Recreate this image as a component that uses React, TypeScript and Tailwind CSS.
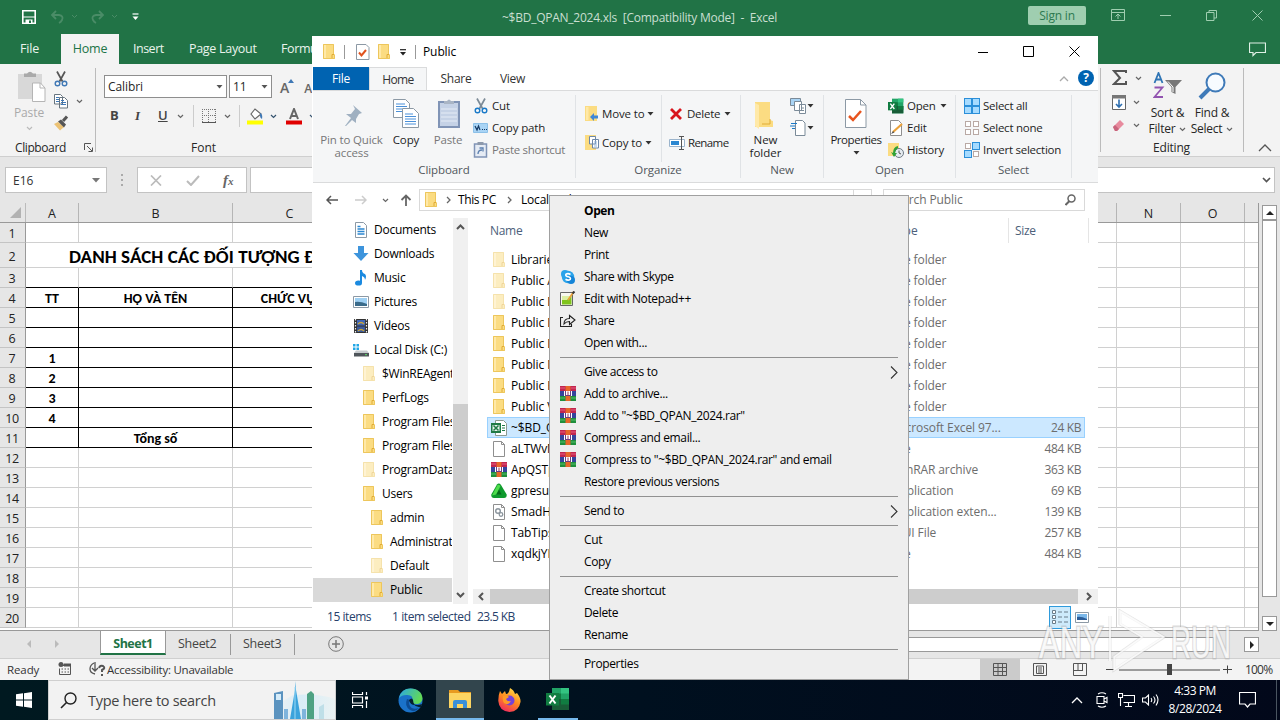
import { ReactNode } from 'react';
import clsx from 'clsx';

type IconProps = { className?: string; faded?: boolean };

/* ---------- small shared glyphs ---------- */

function Chevron({ color = '#666', className = '' }: { color?: string; className?: string }) {
  return (
    <svg width="7" height="5" viewBox="0 0 7 5" className={clsx('shrink-0', className)}>
      <path d="M1 1l2.5 2.5L6 1" fill="none" stroke={color} strokeWidth="1.2" />
    </svg>
  );
}

function Caret({ color = '#333', className = '' }: { color?: string; className?: string }) {
  return (
    <svg width="7" height="4" viewBox="0 0 7 4" className={clsx('shrink-0', className)}>
      <path d="M0.5 0h6L3.5 3.5z" fill={color} />
    </svg>
  );
}

function Folder({ faded, className = '' }: IconProps) {
  return (
    <svg width="16" height="16" viewBox="0 0 16 16" className={clsx('shrink-0', faded && 'opacity-50', className)}>
      <path d="M2 0h11v10l1 .5V15H2z" fill="#fbdc82" />
      <path d="M2.500.5H12.500v10l1 .5v3.500h-11z" fill="none" stroke="#edc65c" />
      <path d="M3 1h2v13H3z" fill="#ffe9a8" />
      <path d="M11 14v-3.5h2" fill="none" stroke="#e0ac35" />
    </svg>
  );
}

function Page() {
  return (
    <svg width="16" height="16" viewBox="0 0 16 16" className="shrink-0">
      <path d="M2.5.5h8l3 3v12h-11z" fill="#fff" stroke="#8f8f8f" />
      <path d="M10.5.5v3h3" fill="none" stroke="#8f8f8f" />
    </svg>
  );
}

function RarIcon() {
  return (
    <svg width="16" height="16" viewBox="0 0 16 16" className="shrink-0">
      <path d="M0 0h16v5H0z" fill="#c2264f" />
      <path d="M0 5h16v5H0z" fill="#35449c" />
      <path d="M0 10h16v5H0z" fill="#1f8f3c" />
      <path d="M5.500 0h5v15h-5z" fill="#e8672a" />
      <path d="M4 5h8v5H4z" fill="#6a3f86" />
      <path d="M4.500 5v5M11.500 5v5" stroke="#fff" />
      <path d="M6 5h4v4H6z" fill="#fff" />
      <path d="M7.500 5.500h1V9h-1z" fill="#a03058" />
      <path d="M0 2h5M11 2h5" stroke="#ef6a8c" strokeWidth=".8" />
      <path d="M0 12h5M11 12h5" stroke="#62c875" strokeWidth=".8" />
    </svg>
  );
}

function XlsIcon() {
  return (
    <svg width="16" height="16" viewBox="0 0 16 16" className="shrink-0">
      <path d="M4.500.5h8l3 3v12h-11z" fill="#fff" stroke="#8c9a90" />
      <path d="M0 3h10v10H0z" fill="#1f7a45" />
      <path d="M1.500 5h7v6h-7z" fill="#e8f3ec" />
      <path d="M2.500 5.500l5 5M7.500 5.500l-5 5" stroke="#1f7a45" strokeWidth="1.500" />
      <path d="M11 5.500h3M11 8h3M11 10.500h3" stroke="#1f7a45" />
    </svg>
  );
}

function GpIcon() {
  return (
    <svg width="16" height="16" viewBox="0 0 16 16" className="shrink-0">
      <path d="M6 1.500Q8-.5 10 2l5.700 9.500Q16 15 13 15H3Q0 15 .3 11.500z" fill="#0f9a2d" />
      <path d="M6.500 2Q8 1 9.500 3L7 8l-2 3.500-4 1z" fill="#4fdc4c" />
      <path d="M8 6.500l2.500 5h-5z" fill="#066a1b" />
    </svg>
  );
}

function DllIcon() {
  return (
    <svg width="16" height="16" viewBox="0 0 16 16" className="shrink-0">
      <path d="M2.500.5h8l3 3v12h-11z" fill="#fff" stroke="#8f8f8f" />
      <path d="M10.500.5v3h3" fill="none" stroke="#8f8f8f" />
      <circle cx="7" cy="7" r="2.300" fill="none" stroke="#8a949c" strokeWidth="1.400" />
      <circle cx="10" cy="10.500" r="1.800" fill="none" stroke="#8a949c" strokeWidth="1.300" />
    </svg>
  );
}

function Scissors({ gray = false }: { gray?: boolean }) {
  return (
    <svg width="16" height="16" viewBox="0 0 16 16" className="shrink-0">
      <path d="M4 .5l5.500 10M12 .5l-5.500 10" stroke={gray ? '#555' : '#7c8b97'} strokeWidth="1.700" />
      <circle cx="4.500" cy="12.500" r="2.300" fill="none" stroke={gray ? '#3f78b5' : '#1979c8'} strokeWidth="1.400" />
      <circle cx="11.500" cy="12.500" r="2.300" fill="none" stroke={gray ? '#3f78b5' : '#1979c8'} strokeWidth="1.400" />
    </svg>
  );
}

/* ---------- Excel ---------- */

function TitleBar() {
  return (
    <div className="flex h-[34px] shrink-0 items-center bg-[#217346] pl-[22px] text-[#c9dfd1]">
      <svg width="14" height="14" viewBox="0 0 14 14">
        <path d="M.8.8h12.400v12.400H.8z" fill="none" stroke="#fff" strokeWidth="1.600" />
        <path d="M1 7.500h12v-1H1zM3.500 13V9.500h7V13" fill="#fff" />
        <path d="M7 10.500h2V13H7z" fill="#217346" />
      </svg>
      <svg width="28" height="14" viewBox="0 0 28 14" className="ml-3.5">
        <path d="M6 1L2 5l4 4M2 5h7q5 1 3 5-1 2-3 3" fill="none" stroke="#4a8c67" strokeWidth="1.800" />
        <path d="M22 5l2.500 2.500L27 5" fill="none" stroke="#4a8c67" />
      </svg>
      <svg width="28" height="14" viewBox="0 0 28 14" className="ml-3">
        <path d="M9 1l4 4-4 4M13 5H6Q1 6 3 10q1 2 3 3" fill="none" stroke="#4a8c67" strokeWidth="1.800" />
        <path d="M22 5l2.500 2.500L27 5" fill="none" stroke="#4a8c67" />
      </svg>
      <svg width="7" height="8" viewBox="0 0 7 8" className="ml-3.5">
        <path d="M.5 1h6" stroke="#fff" strokeWidth="1.200" />
        <path d="M.5 3.500h6l-3 3.500z" fill="#fff" />
      </svg>
      <span className="ml-[363px] w-[276px] pt-px text-[12px] tracking-[-0.25px] whitespace-pre">
        ~$BD_QPAN_2024.xls  [Compatibility Mode]  -  Excel
      </span>
      <span className="mb-[3px] ml-[250px] flex h-[19px] w-[58px] items-center justify-center rounded-[2px] bg-[#9fceb0] text-[12px] tracking-[-0.2px] text-[#2d7a50]">
        Sign in
      </span>
      <svg width="14" height="12" viewBox="0 0 14 12" className="mb-1 ml-[25px]" fill="none" stroke="#9fceb0">
        <path d="M.5.5h13v11H.5zM.5 3.500h13M7 10V5M4.500 7.500L7 5l2.500 2.500" />
      </svg>
      <svg width="11" height="11" viewBox="0 0 11 11" className="mb-1 ml-[35px]" stroke="#9fceb0">
        <path d="M0 5.500h11" />
      </svg>
      <svg width="11" height="11" viewBox="0 0 11 11" className="mb-1 ml-[35px]" fill="none" stroke="#9fceb0">
        <path d="M.5 2.500h7.500v8H.5zM3 2.500V.5h7.500V8H8" />
      </svg>
      <svg width="11" height="11" viewBox="0 0 11 11" className="mb-1 ml-[35px]" stroke="#9fceb0">
        <path d="M.5.5l10 10M10.500.5l-10 10" />
      </svg>
    </div>
  );
}

function ExcelTabs() {
  return (
    <div className="flex h-[30px] shrink-0 bg-[#217346] text-[12.500px] leading-[29px] tracking-[-0.2px] text-[#e9f3ec]">
      <span className="w-[61px] pl-5">File</span>
      <span className="w-[58px] bg-[#f3f3f3] text-center text-[#217346]">Home</span>
      <span className="ml-3.5 w-14 tracking-[-0.5px]">Insert</span>
      <span className="w-[92px] tracking-[-0.3px]">Page Layout</span>
      <span className="tracking-[-0.4px]">Formulas</span>
      <svg width="17" height="15" viewBox="0 0 17 15" className="mr-3.5 ml-auto self-center" fill="none" stroke="#dff0e5">
        <path d="M.5 1h16v9.500H7l-3 3v-3H.5z" strokeWidth="1.200" />
      </svg>
    </div>
  );
}

function ExcelRibbon() {
  return (
    <div className="flex h-[93px] shrink-0 border-b border-[#cfcfcf] bg-[#f3f3f3] text-[12px] text-[#262626]">
      <div className="flex w-[95px] flex-col">
        <div className="flex h-[75px] pt-[7px]">
          <div className="flex w-[50px] flex-col items-center pl-2 text-[#aaa]">
            <svg width="29" height="31" viewBox="0 0 29 31" className="ml-1">
              <path d="M1 3h24v25H1z" fill="#d8d8d8" />
              <path d="M7 6V2.500h3Q13-1 16 2.500h3V6z" fill="#aaa" />
              <path d="M15.500 12h8l4.500 5v13.500H15.500z" fill="#fff" stroke="#b5b5b5" />
              <path d="M23 12v5h5" fill="none" stroke="#b5b5b5" />
            </svg>
            <span className="leading-[22px] tracking-[-0.1px]">Paste</span>
            <Chevron color="#bbb" className="mt-0.5" />
          </div>
          <div className="ml-[3px] flex flex-col gap-1.5">
            <Scissors gray />
            <div className="flex items-center gap-2">
              <svg width="16" height="16" viewBox="0 0 16 16" fill="#fff" stroke="#67747f">
                <path d="M1.500 1.500h6l2 2V11h-8zM6.500 4.500h5l3 3V15h-8z" />
                <path d="M3 4.500h3M3 6.500h3M3 8.500h3M8 9.500h5M8 11.500h5M8 7.500h3" stroke="#3f78b5" />
              </svg>
              <Chevron className="-ml-px" />
            </div>
            <svg width="16" height="16" viewBox="0 0 16 16">
              <path d="M1 9l4-2 6 5-4 3.500z" fill="#ecc274" />
              <path d="M5 6.500l3-2 5 5-2 3z" fill="#555" />
              <path d="M10 6l4-4.500" stroke="#555" strokeWidth="3" />
            </svg>
          </div>
        </div>
        <div className="flex items-center pl-[15px] leading-[17px]">
          <span className="w-[69px] tracking-[-0.4px]">Clipboard</span>
          <svg width="9" height="9" viewBox="0 0 9 9" fill="none" stroke="#555">
            <path d="M.5 7V.5H7M3 3l5 5M8.500 4.500v4h-4" />
          </svg>
        </div>
      </div>
      <div className="my-1 w-px bg-[#bbb]" />
      <div className="flex w-[216px] flex-col overflow-hidden pt-[11px] pl-2">
        <div className="flex h-[23px] items-center">
          <span className="flex h-full w-[123px] shrink-0 items-center justify-between border border-[#8e8e8e] bg-white pr-[3px] pl-[3px] tracking-[-0.1px]">
            Calibri
            <Caret color="#555" />
          </span>
          <span className="ml-0.5 flex h-full w-[43px] shrink-0 items-center justify-between border border-[#8e8e8e] bg-white pr-[3px] pl-[3px]">
            11
            <Caret color="#555" />
          </span>
          <span className="ml-2 pt-0.5 text-[14px] font-semibold text-[#666]">A</span>
          <svg width="6" height="4" viewBox="0 0 6 4" className="-mt-3 -ml-px shrink-0">
            <path d="M0 4l3-4 3 4z" fill="#3f78b5" />
          </svg>
          <span className="ml-2.5 pt-1 text-[12px] font-semibold text-[#666]">A</span>
        </div>
        <div className="mt-[7px] flex h-[22px] w-[230px] items-center text-[13px] text-[#444]">
          <b className="w-[24px] pl-1.5">B</b>
          <i className="w-[24px] pl-[7px] font-['Liberation_Serif',serif] font-bold">I</i>
          <span className="w-[25px] pl-1.5 font-semibold underline">U</span>
          <Chevron />
          <span className="ml-[9px] h-full w-px bg-[#ccc]" />
          <svg width="14" height="14" viewBox="0 0 14 14" className="ml-2 shrink-0" stroke="#777" strokeDasharray="1 1">
            <path d="M.5 0v14M13.500 0v14M6.500 0v14M0 .5h14M0 6.500h14" />
            <path d="M0 13.500h14" stroke="#555" strokeDasharray="none" />
          </svg>
          <Chevron className="ml-2" />
          <span className="ml-2 h-full w-px bg-[#ccc]" />
          <svg width="17" height="17" viewBox="0 0 17 17" className="ml-[7px] shrink-0">
            <path d="M4 6l4-5 6 5-6 5z" fill="#fff" stroke="#666" strokeWidth="1.200" />
            <path d="M13 5q3 1 2 6-2-1-2-3" fill="#3f78b5" />
            <path d="M0 12.500h16v4H0z" fill="#ff0" />
          </svg>
          <Chevron className="ml-1.5" color="#35536f" />
          <svg width="16" height="17" viewBox="0 0 16 17" className="ml-[9px] shrink-0">
            <path d="M4 11L8 1l4 10M5.500 8h5" fill="none" stroke="#666" strokeWidth="2" />
            <path d="M0 12.500h16v4H0z" fill="#e00000" />
          </svg>
          <Chevron className="ml-[7px]" color="#35536f" />
        </div>
        <span className="mt-[12px] ml-[87px] leading-[17px]">Font</span>
      </div>
      <div className="ml-auto flex">
        <div className="my-1 w-px bg-[#bbb]" />
        <div className="flex w-[142px] flex-col">
          <div className="flex h-[76px] pt-1">
            <div className="flex w-[44px] flex-col gap-2 pt-px pl-[11px]">
              <div className="flex items-center gap-[7px]">
                <svg width="16" height="18" viewBox="0 0 16 18">
                  <path d="M14 4V2H2l6 7-6 6h12v-3" fill="none" stroke="#555" strokeWidth="2" />
                </svg>
                <Chevron />
              </div>
              <div className="flex items-center gap-[7px]">
                <svg width="14" height="15" viewBox="0 0 14 15">
                  <path d="M.5.5h13v14H.5z" fill="#fff" stroke="#666" />
                  <path d="M0 0h14v3.500H0z" fill="#777" />
                  <path d="M7 4.500v8M4 9l3 3 3-3" fill="none" stroke="#2f6fb0" strokeWidth="1.600" />
                </svg>
                <Chevron />
              </div>
              <div className="flex items-center gap-[7px]">
                <svg width="14" height="14" viewBox="0 0 14 14">
                  <path d="M1 9l7-7 4 4-7 7H3z" fill="#e78a9d" />
                  <path d="M1 9l2-2 4 4-2 2H3z" fill="#c8647c" />
                </svg>
                <Chevron />
              </div>
            </div>
            <div className="flex w-[45px] flex-col items-center leading-[16px]">
              <svg width="30" height="29" viewBox="0 0 30 29" className="mt-1">
                <path d="M1.500 11L5.500 1l4 10M3 7.500h5" fill="none" stroke="#2f75b5" strokeWidth="1.800" />
                <path d="M1.500 15.500h8l-8 9.500h8.500" fill="none" stroke="#9254b0" strokeWidth="1.800" />
                <path d="M12 8h17l-6.500 7v7l-4-2v-5z" fill="#777" />
                <path d="M15 9.500l5 5.500v5" fill="none" stroke="#fff" />
              </svg>
              <span className="mt-1 w-11 text-center tracking-[-0.2px]">Sort &amp;</span>
              <span className="flex items-center gap-1 tracking-[-0.2px]">Filter <Chevron /></span>
            </div>
            <div className="flex w-[44px] flex-col items-center leading-[16px]">
              <svg width="28" height="29" viewBox="0 0 28 29" className="mt-1">
                <circle cx="17.500" cy="10.500" r="9" fill="#f7fbff" stroke="#3f7ab8" strokeWidth="2" />
                <path d="M11 17l-9 9" stroke="#3f7ab8" strokeWidth="4" />
              </svg>
              <span className="mt-1 w-11 text-center tracking-[-0.2px]">Find &amp;</span>
              <span className="flex items-center gap-1 tracking-[-0.3px]">Select <Chevron /></span>
            </div>
          </div>
          <span className="pr-px text-center leading-[17px] tracking-[-0.2px]">Editing</span>
        </div>
        <div className="my-1 w-px bg-[#bbb]" />
        <svg width="14" height="8" viewBox="0 0 14 8" className="mr-2 mb-1 ml-3.5 self-end">
          <path d="M1 7l6-6 6 6" fill="none" stroke="#555" strokeWidth="1.300" />
        </svg>
      </div>
    </div>
  );
}

function FormulaBar() {
  return (
    <div className="flex h-[46px] shrink-0 items-start bg-[#e6e6e6] pt-[10px] pr-[5px] pl-[5px] text-[12px] text-[#333]">
      <div className="flex h-[26px] w-[102px] items-center justify-between border border-[#c3c3c3] bg-white pt-px pr-1.5 pl-[7px]">
        E16
        <svg width="8" height="5" viewBox="0 0 8 5">
          <path d="M0 0h8L4 4.500z" fill="#777" />
        </svg>
      </div>
      <div className="mt-[7px] ml-[14px] flex flex-col gap-[3px]">
        <span className="size-0.5 bg-[#aaa]" />
        <span className="size-0.5 bg-[#aaa]" />
        <span className="size-0.5 bg-[#aaa]" />
      </div>
      <div className="ml-[14px] flex h-[26px] w-[110px] items-center border border-[#c3c3c3] bg-white pl-3">
        <svg width="12" height="11" viewBox="0 0 12 11">
          <path d="M1 .5l10 10M11 .5l-10 10" stroke="#bbb" strokeWidth="1.700" />
        </svg>
        <svg width="14" height="11" viewBox="0 0 14 11" className="ml-6">
          <path d="M1 6l4 4 8-9" fill="none" stroke="#bbb" strokeWidth="2" />
        </svg>
        <i className="ml-[23px] font-['Liberation_Serif',serif] text-[15px] leading-none font-bold text-[#666]">f<span className="text-[11px]">x</span></i>
      </div>
      <div className="ml-[3px] flex h-[26px] flex-1 items-center justify-end border border-[#c3c3c3] bg-white pr-[3px]">
        <svg width="9" height="6" viewBox="0 0 9 6">
          <path d="M1 1l3.500 3.500L8 1" fill="none" stroke="#555" strokeWidth="1.700" />
        </svg>
      </div>
    </div>
  );
}

const BLACK_ROWS = [3, 4, 5, 6, 7, 8, 9, 10, 11];
const CELLS_A: Record<number, string> = { 4: 'TT', 7: '1', 8: '2', 9: '3', 10: '4' };
const CELLS_B: Record<number, string> = { 4: 'HỌ VÀ TÊN', 11: 'Tổng số' };

function SheetRow({ n }: { n: number }) {
  const line = BLACK_ROWS.includes(n) ? 'border-b-black' : 'border-b-[#d0d0d0]';
  const side = n >= 4 && n <= 11 ? 'border-r-black' : 'border-r-[#d0d0d0]';
  const cell = clsx('flex items-center justify-center border-r border-b pt-0.5', line, side);
  return (
    <div className={clsx("flex shrink-0 font-['Carlito','Lato',sans-serif] text-[14px] leading-[17px] font-bold text-black", n === 2 ? 'h-[25px]' : 'h-5')}>
      <span className="flex w-[26px] items-center justify-center border-r border-b border-r-[#999] border-b-[#c4c4c4] bg-[#e6e6e6] pt-0.5 pr-px font-['Open_Sans',sans-serif] text-[12.500px] font-normal tracking-[-0.3px] text-[#222]">
        {n}
      </span>
      {n === 2 ? (
        <span className="w-[1090px] border-b border-b-[#d0d0d0] pl-[43px] text-[19px] leading-[27px] tracking-[0.050px] whitespace-nowrap">
          DANH SÁCH CÁC ĐỐI TƯỢNG ĐƯỢC
        </span>
      ) : (
        <>
          <span className={clsx(cell, 'w-[53px]')}>{CELLS_A[n]}</span>
          <span className={clsx(cell, 'w-[154px]')}>{CELLS_B[n]}</span>
          <span className={clsx(cell, 'w-[114px] pr-[3px] whitespace-nowrap')}>{n === 4 ? 'CHỨC VỤ' : ''}</span>
          <span className="w-[769px] border-b border-b-[#d0d0d0]" />
        </>
      )}
      <span className="flex flex-1 border-b border-l border-[#d0d0d0]">
        <span className="w-16 border-r border-[#d0d0d0]" />
        <span className="w-16 border-r border-[#d0d0d0]" />
      </span>
    </div>
  );
}

function ScrollArrow({ d }: { d: string }) {
  return (
    <span className="flex size-[15px] shrink-0 items-center justify-center border border-[#999] bg-white">
      <svg width="8" height="8" viewBox="0 0 8 8">
        <path d={d} fill="#222" />
      </svg>
    </span>
  );
}

function Sheet() {
  return (
    <div className="flex h-[428px] shrink-0 bg-[#e6e6e6]">
      <div className="flex w-[1259px] flex-col overflow-hidden border-r border-b border-[#999] bg-white">
        <div className="flex h-5 shrink-0 border-b border-[#999] bg-[#e6e6e6] text-[12.500px] leading-[21px] text-[#222]">
          <span className="flex w-[26px] items-end justify-end border-r border-[#bbb] pr-1 pb-1">
            <svg width="11" height="11" viewBox="0 0 11 11">
              <path d="M11 0v11H0z" fill="#b2b2b2" />
            </svg>
          </span>
          <span className="w-[53px] border-r border-[#b5b5b5] text-center">A</span>
          <span className="w-[154px] border-r border-[#b5b5b5] text-center">B</span>
          <span className="w-[114px] border-r border-[#b5b5b5] text-center">C</span>
          <span className="w-[770px] border-r border-[#b5b5b5]" />
          <span className="w-16 border-r border-[#b5b5b5] text-center">N</span>
          <span className="w-16 border-r border-[#b5b5b5] text-center">O</span>
        </div>
        {Array.from({ length: 20 }, (_, i) => (
          <SheetRow key={i} n={i + 1} />
        ))}
      </div>
      <div className="ml-[3px] flex w-[15px] flex-col pt-0.5">
        <ScrollArrow d="M0 6l4-4 4 4z" />
        <span className="h-[377px] border border-[#999] bg-white" />
        <span className="flex-1" />
        <ScrollArrow d="M0 2l4 4 4-4z" />
      </div>
    </div>
  );
}

function SheetTabs() {
  return (
    <div className="flex h-[27px] shrink-0 bg-[#e6e6e6] text-[12.500px] tracking-[-0.3px] text-[#444]">
      <div className="flex w-[100px] items-center justify-between pr-10 pb-0.5 pl-[26px]">
        <svg width="6" height="8" viewBox="0 0 6 8"><path d="M5 0v8L1 4z" fill="#bbb" /></svg>
        <svg width="6" height="8" viewBox="0 0 6 8"><path d="M1 0v8l4-4z" fill="#bbb" /></svg>
      </div>
      <span className="mb-[3px] w-[66px] border-x border-b-2 border-x-[#999] border-b-[#217346] bg-white text-center leading-[25px] font-bold tracking-[-0.5px] text-[#217346]">
        Sheet1
      </span>
      <span className="my-[3px] w-[65px] border-r border-[#999] pl-3 leading-[19px]">Sheet2</span>
      <span className="my-[3px] w-16 border-r border-[#999] pl-3 leading-[19px]">Sheet3</span>
      <svg width="16" height="16" viewBox="0 0 16 16" className="mt-[5px] ml-[33px]" fill="none" stroke="#777">
        <circle cx="8" cy="8" r="7.300" />
        <path d="M8 4v8M4 8h8" strokeWidth="1.500" />
      </svg>
      <div className="mt-1.5 mr-[21px] ml-auto flex items-start">
        <span className="h-[15px] w-[500px] border border-[#999] bg-white" />
        <span className="w-[30px]" />
        <ScrollArrow d="M2 0l4 4-4 4z" />
      </div>
    </div>
  );
}

function StatusBar() {
  return (
    <div className="flex h-[22px] shrink-0 items-center border-t border-[#cfcfcf] bg-[#f3f3f3] pl-[7px] text-[11.500px] tracking-[-0.25px] text-[#333]">
      <span className="w-[51px] tracking-[-0.1px]">Ready</span>
      <svg width="13" height="13" viewBox="0 0 13 13" className="mb-0.5">
        <path d="M3 3.500h9.500v9H1.500v-6" fill="none" stroke="#555" />
        <circle cx="3" cy="2.500" r="2.500" fill="#555" />
        <path d="M6 2h7v2H6zM3.500 7h1.500M6.500 7h1.500M9.500 7H11M3.500 10H5M6.500 10H8M9.500 10H11" fill="#555" stroke="#555" />
      </svg>
      <svg width="17" height="15" viewBox="0 0 17 15" className="ml-[18px]" fill="none" stroke="#555">
        <path d="M5 1Q1 3 1 7t5 5M6 0v9M3 6l3 3 3-3" strokeWidth="1.300" />
        <path d="M10 6q1-3 4-2 3 2-1 4v2M13 12v2" strokeWidth="2" />
      </svg>
      <span className="ml-px whitespace-nowrap">Accessibility: Unavailable</span>
      <div className="ml-auto flex h-full items-center">
        <span className="flex h-full w-10 items-center justify-center bg-[#cbcbcb]">
          <svg width="14" height="13" viewBox="0 0 14 13" fill="none" stroke="#555">
            <path d="M.5.500h13v12H.5zM5 0v13M9.500 0v13M0 4.500h14M0 8.500h14" />
          </svg>
        </span>
        <svg width="14" height="13" viewBox="0 0 14 13" className="ml-[13px]" fill="none" stroke="#555">
          <path d="M.5.500h13v12H.5zM3.500 3h7v7.500h-7zM5 5h4M5 7h4M5 9h4" />
        </svg>
        <svg width="14" height="13" viewBox="0 0 14 13" className="ml-[26px]" fill="none" stroke="#555">
          <path d="M.5.500h13v12H.5zM5 0v8M9.500 0v8M0 7.500h10" />
        </svg>
        <svg width="126" height="13" viewBox="0 0 126 13" className="ml-[19px]" fill="none" stroke="#444">
          <path d="M0 6.500h8M13 7h101M117 6.500h9M121.500 2.500v8" />
          <path d="M61 1h5v11h-5z" fill="#444" stroke="none" />
        </svg>
        <span className="mr-2 ml-[13px] w-[27px] text-[12px] tracking-[-0.8px]">100%</span>
      </div>
    </div>
  );
}

/* ---------- Explorer ---------- */

function RibbonGroup({ title, className, children }: { title: string; className: string; children: ReactNode }) {
  return (
    <div className={clsx('mt-1 mb-1 flex flex-col border-r border-[#e0e3e6]', className)}>
      <div className="flex h-[74px]">{children}</div>
      <span className="text-center leading-[16px] tracking-[-0.1px] text-[#51565c]">{title}</span>
    </div>
  );
}

function ExplorerRibbon() {
  return (
    <div className="flex h-[93px] shrink-0 border-t border-b border-[#dadbdc] bg-[#f5f6f7] text-[11.500px] whitespace-nowrap text-[#1e1e1e]">
      <RibbonGroup title="Clipboard" className="w-[263px]">
        <div className="flex w-[77px] flex-col items-center pt-2 leading-[13px] tracking-[-0.15px] text-[#777]">
          <svg width="24" height="24" viewBox="0 0 24 24">
            <path d="M13 2l9 8-3 1-3 5v4l-4-3-6 6-1 0 6-8-5-4 5 0 4-5z" fill="#9fb0c1" />
          </svg>
          <span className="mt-1.5">Pin to Quick</span>
          <span>access</span>
        </div>
        <div className="flex w-8 flex-col items-center pt-1 leading-[14px]">
          <svg width="26" height="29" viewBox="0 0 26 29" fill="#fff" stroke="#8c99a5">
            <path d="M.5.5h12l4 4v14H.5z" />
            <path d="M9.500 9.500h11l5 5v14h-16z" />
            <path d="M3 5h9M3 7.500h11M3 10h6M3 12.500h6M12 15h8M12 17.500h11M12 20h11M12 22.500h11M12 25h11" stroke="#4a90d9" />
          </svg>
          <span className="mt-[5px] tracking-[-0.1px]">Copy</span>
        </div>
        <div className="flex w-[52px] flex-col items-center pt-1 leading-[14px] tracking-[-0.2px] text-[#777]">
          <svg width="22" height="29" viewBox="0 0 22 29" className="ml-0.5">
            <path d="M1 3h20v25H1z" fill="#c5d2e6" stroke="#8094b6" strokeWidth="2" />
            <path d="M6 5V2h3q2-3 4 0h3v3z" fill="#a9b5c5" />
            <path d="M3 10h16M3 14h16M3 18h16M3 22h16" stroke="#e5ecf6" />
          </svg>
          <span className="mt-[5px]">Paste</span>
        </div>
        <div className="-ml-px flex flex-col gap-1.5 pt-[3px] leading-4 tracking-[-0.15px]">
          <span className="flex items-center gap-[3px]"><Scissors />Cut</span>
          <span className="flex items-center gap-1">
            <svg width="15" height="10" viewBox="0 0 15 10">
              <path d="M.5.500h14v9H.5z" fill="#a9d4f5" stroke="#8cc0e8" />
              <path d="M2 3l2 4 1.500-4L7 7M9 6.500h1M11 6.500h1M13 6.500h1" fill="none" stroke="#153a66" strokeWidth="1.200" />
            </svg>
            Copy path
          </span>
          <span className="flex items-center gap-1 text-[#777]">
            <svg width="15" height="16" viewBox="0 0 15 16">
              <path d="M1.500 2h12v13h-12z" fill="#e5ebf4" stroke="#8094b6" strokeWidth="1.500" />
              <path d="M4.500 0h6v3h-6z" fill="#8d99ab" />
              <path d="M5 12q0-4 4-4M6.500 6h3.500v3.500" fill="none" stroke="#5b7fae" strokeWidth="1.300" />
            </svg>
            <span className="tracking-[-0.3px]">Paste shortcut</span>
          </span>
        </div>
      </RibbonGroup>
      <RibbonGroup title="Organize" className="w-[165px]">
        <div className="flex w-[86px] flex-col gap-[13px] border-r border-[#e0e3e6] pt-[11px] pl-2 leading-4 tracking-[-0.15px]">
          <span className="flex items-center gap-0.5">
            <svg width="16" height="16" viewBox="0 0 16 16">
              <path d="M1 0h12v15H1z" fill="#fbdc82" />
              <path d="M2 1h2.500v13H2z" fill="#ffe9a8" />
              <path d="M6 11l4-4v2.500h4v3h-4V15z" fill="#3f86d6" />
            </svg>
            Move to <Caret className="ml-px" />
          </span>
          <span className="flex items-center gap-0.5">
            <svg width="16" height="16" viewBox="0 0 16 16">
              <path d="M1 0h11v15H1z" fill="#fbdc82" />
              <path d="M5.500 1.500h6V9h-6zM8.500 4.500h6V13h-6z" fill="#fff" stroke="#6c87a8" />
              <path d="M10 7h3M10 9h3M10 11h3" stroke="#8fb4dd" />
            </svg>
            Copy to <Caret className="ml-px" />
          </span>
        </div>
        <div className="flex flex-col gap-[13px] pt-[11px] pl-[7px] leading-4 tracking-[-0.25px]">
          <span className="flex items-center gap-1">
            <svg width="14" height="14" viewBox="0 0 14 14">
              <path d="M2 2l10 10M12 2L2 12" stroke="#d8141c" strokeWidth="2.800" />
            </svg>
            Delete <Caret />
          </span>
          <span className="flex items-center gap-[3px]">
            <svg width="16" height="14" viewBox="0 0 16 14" fill="none">
              <path d="M.5 3.500h15v7H.5z" fill="#fff" stroke="#9bb4cc" />
              <path d="M2 5h8v4H2z" fill="#2b87d1" />
              <path d="M10 .5h5M12.500.500v13M10 13.500h5" stroke="#555" />
            </svg>
            <span className="tracking-[-0.6px]">Rename</span>
          </span>
        </div>
      </RibbonGroup>
      <RibbonGroup title="New" className="w-[83px]">
        <div className="flex w-[49px] flex-col items-center pt-1.5 leading-[13px]">
          <svg width="20" height="28" viewBox="0 0 20 28" className="mr-1">
            <path d="M1 1h15v18l3 1v6H1z" fill="#fbdc82" />
            <path d="M1 2l4 2v24l-4-3z" fill="#ffe9a8" />
            <path d="M8 23h8v-5" fill="none" stroke="#e0ac35" />
          </svg>
          <span className="mt-1">New</span>
          <span>folder</span>
        </div>
        <div className="flex flex-col gap-1.5 pt-[3px]">
          <span className="flex items-center">
            <svg width="17" height="16" viewBox="0 0 17 16" fill="#fff" stroke="#7b8b99">
              <path d="M.5.500h10v7H.5z" fill="#a9d4f5" />
              <path d="M4.500 3.500h7v9h-7zM9.500 6.500h6v9h-6z" />
              <path d="M11 10h3M11 12.500h3" />
            </svg>
            <Caret />
          </span>
          <span className="flex items-center">
            <svg width="17" height="16" viewBox="0 0 17 16" fill="none">
              <path d="M5.500.500h7l2.500 2.500v12.500H5.500z" fill="#fff" stroke="#7b8b99" />
              <path d="M1 3.500h6M0 6h5M2 8.500h3" stroke="#1979c8" strokeWidth="1.200" />
            </svg>
            <Caret />
          </span>
        </div>
      </RibbonGroup>
      <RibbonGroup title="Open" className="w-[132px]">
        <div className="flex w-[64px] flex-col items-center pt-1 leading-[14px] tracking-[-0.45px]">
          <svg width="22" height="29" viewBox="0 0 22 29" fill="none">
            <path d="M.5.500h15l5.500 5.500v22.500H.5z" fill="#fff" stroke="#8c99a5" />
            <path d="M15.500.500V6H21" stroke="#8c99a5" />
            <path d="M4 17l4 4 8-9" stroke="#e8541e" strokeWidth="2.500" />
          </svg>
          <span className="mt-[5px]">Properties</span>
          <Caret className="mt-1" />
        </div>
        <div className="flex flex-col gap-1.5 pt-[3px] leading-4 tracking-[-0.2px]">
          <span className="flex items-center gap-[3px]">
            <ExcelLogo size={16} /> Open <Caret className="ml-px" />
          </span>
          <span className="flex items-center gap-[3px]">
            <svg width="16" height="16" viewBox="0 0 16 16">
              <path d="M2.500.500h8l3 3v12h-11z" fill="#fff" stroke="#8f8f8f" />
              <path d="M5 12l9-8" stroke="#eba23a" strokeWidth="2.200" />
              <path d="M3 14l2-3 1.500 1.500z" fill="#555" />
            </svg>
            Edit
          </span>
          <span className="flex items-center gap-[3px]">
            <svg width="16" height="16" viewBox="0 0 16 16">
              <path d="M0 1h11v13H0z" fill="#fbdc82" />
              <circle cx="11" cy="11" r="4.500" fill="#e5ebf0" stroke="#6e7a85" />
              <path d="M11 8.500V11l2 1" fill="none" stroke="#555" />
              <path d="M10 4Q5 5 5 11l-2-1 3 5 3-4-2 0q0-3 3-5z" fill="#2fa237" />
            </svg>
            History
          </span>
        </div>
      </RibbonGroup>
      <RibbonGroup title="Select" className="w-[116px]">
        <div className="flex flex-col gap-1.5 pt-[3px] pl-2 leading-4 tracking-[-0.25px]">
          <span className="flex items-center gap-0.5"><Tiles on={[0, 1, 2, 3]} />Select all</span>
          <span className="flex items-center gap-0.5"><Tiles on={[]} />Select none</span>
          <span className="flex items-center gap-0.5"><Tiles on={[1, 2]} />Invert selection</span>
        </div>
      </RibbonGroup>
    </div>
  );
}

function Tiles({ on }: { on: number[] }) {
  return (
    <svg width="16" height="16" viewBox="0 0 16 16" className="mr-px">
      {[0, 1, 2, 3].map((i) => {
        const active = on.includes(i);
        const x = (i % 2) * 8;
        const y = Math.floor(i / 2) * 8;
        return active ? (
          <rect key={i} x={x + 0.5} y={y + 0.5} width="7" height="7" fill="#a6dbff" stroke="#2b8fd9" />
        ) : (
          <rect key={i} x={x + 1.5} y={y + 1.5} width="5" height="5" fill="#fff" stroke="#b9a9a4" />
        );
      })}
    </svg>
  );
}

function ExcelLogo({ size }: { size: number }) {
  return (
    <svg width={size} height={size} viewBox="0 0 24 24" className="shrink-0">
      <path d="M6 1h17v22H6z" fill="#21a366" />
      <path d="M6 6.500h9V12H6z" fill="#107c41" />
      <path d="M15 1h8v5.500h-8z" fill="#33c481" />
      <path d="M6 12h17v11H6z" fill="#185c37" />
      <path d="M15 12h8v5.500h-8z" fill="#107c41" />
      <path d="M0 6h13v12.500H0z" fill="#107c41" />
      <path d="M3.500 8.500l6 8M9.500 8.500l-6 8" stroke="#fff" strokeWidth="2" />
    </svg>
  );
}

function DocumentsIcon() {
  return (
    <svg width="16" height="16" viewBox="0 0 16 16" className="shrink-0">
      <path d="M2.500.500h8l3 3v12h-11z" fill="#fff" stroke="#8c99a5" />
      <path d="M4.500 4.500h3M4.500 7h7M4.500 9.500h7M4.500 12h7" stroke="#2b87d1" strokeWidth="1.300" />
    </svg>
  );
}

function DownloadsIcon() {
  return (
    <svg width="16" height="16" viewBox="0 0 16 16" className="shrink-0">
      <path d="M5 0h6v7h4.500L8 15 .5 7H5z" fill="#3d94dc" />
    </svg>
  );
}

function MusicIcon() {
  return (
    <svg width="16" height="16" viewBox="0 0 16 16" className="shrink-0">
      <path d="M7 0h2q0 3 3 4 2 2 0 6 0-3-3-4v7H7z" fill="#1b8ae0" />
      <ellipse cx="5.500" cy="13" rx="3.500" ry="2.600" fill="#1b8ae0" />
    </svg>
  );
}

function PicturesIcon() {
  return (
    <svg width="16" height="16" viewBox="0 0 16 16" className="shrink-0">
      <path d="M.5 2.500h15v11H.5z" fill="#fff" stroke="#8c99a5" />
      <path d="M2 4h12v8H2z" fill="#9fd0f3" />
      <path d="M2 8q5-1 12 2v2H2z" fill="#3a6b8a" />
    </svg>
  );
}

function VideosIcon() {
  return (
    <svg width="16" height="16" viewBox="0 0 16 16" className="shrink-0">
      <path d="M1 1h14v14H1z" fill="#333" />
      <path d="M4 2h8v5.500H4z" fill="#3f66b8" />
      <path d="M4 8.500h8V14H4z" fill="#39589c" />
      <path d="M5 6q3-3 6 0M5 13q3-3 6 0" fill="none" stroke="#c9a53b" strokeWidth="1.500" />
      <path d="M2.500 1v14M13.500 1v14" stroke="#eee" strokeWidth="1.200" strokeDasharray="1.500 1.500" />
    </svg>
  );
}

function DiskIcon() {
  return (
    <svg width="16" height="16" viewBox="0 0 16 16" className="shrink-0">
      <path d="M0 2h2.500v2.500H0zM3.500 2H6v2.500H3.500zM0 5.500h2.500V8H0zM3.500 5.500H6V8H3.500z" fill="#22a7e6" />
      <path d="M3 8.500h11l2 2.500H1z" fill="#c7cbce" />
      <path d="M1 11h15v3.500H1z" fill="#50565b" />
      <path d="M12 12.700h2" stroke="#5fe06b" />
    </svg>
  );
}

const NAV: { label: string; level: number; icon?: ReactNode; faded?: boolean }[] = [
  { label: 'Documents', level: 0, icon: <DocumentsIcon /> },
  { label: 'Downloads', level: 0, icon: <DownloadsIcon /> },
  { label: 'Music', level: 0, icon: <MusicIcon /> },
  { label: 'Pictures', level: 0, icon: <PicturesIcon /> },
  { label: 'Videos', level: 0, icon: <VideosIcon /> },
  { label: 'Local Disk (C:)', level: 0, icon: <DiskIcon /> },
  { label: '$WinREAgent', level: 1, faded: true },
  { label: 'PerfLogs', level: 1 },
  { label: 'Program Files', level: 1 },
  { label: 'Program Files', level: 1 },
  { label: 'ProgramData', level: 1, faded: true },
  { label: 'Users', level: 1 },
  { label: 'admin', level: 2 },
  { label: 'Administrator', level: 2 },
  { label: 'Default', level: 2, faded: true },
  { label: 'Public', level: 2 },
];

const LEVEL_PAD = ['pl-10', 'pl-12', 'pl-14'];

const FILES: { name: string; type: string; size?: string; icon: ReactNode }[] = [
  { name: 'Libraries', type: 'File folder', icon: <Folder faded /> },
  { name: 'Public Account Pictures', type: 'File folder', icon: <Folder faded /> },
  { name: 'Public Desktop', type: 'File folder', icon: <Folder faded /> },
  { name: 'Public Documents', type: 'File folder', icon: <Folder /> },
  { name: 'Public Downloads', type: 'File folder', icon: <Folder /> },
  { name: 'Public Music', type: 'File folder', icon: <Folder /> },
  { name: 'Public Pictures', type: 'File folder', icon: <Folder /> },
  { name: 'Public Videos', type: 'File folder', icon: <Folder /> },
  { name: '~$BD_QPAN_2024', type: 'Microsoft Excel 97...', size: '24 KB', icon: <XlsIcon /> },
  { name: 'aLTWvM', type: 'File', size: '484 KB', icon: <Page /> },
  { name: 'ApQSTp', type: 'WinRAR archive', size: '363 KB', icon: <RarIcon /> },
  { name: 'gpresult', type: 'Application', size: '69 KB', icon: <GpIcon /> },
  { name: 'SmadHook', type: 'Application exten...', size: '139 KB', icon: <DllIcon /> },
  { name: 'TabTips', type: 'MUI File', size: '257 KB', icon: <Page /> },
  { name: 'xqdkjYI', type: 'File', size: '484 KB', icon: <Page /> },
];

function Explorer() {
  return (
    <div className="absolute top-9 left-[312px] flex h-[594px] w-[786px] flex-col overflow-hidden bg-white pl-px text-[12px] text-black">
      <div className="flex h-[31px] shrink-0 items-center pl-2">
        <Folder />
        <span className="mr-[11px] ml-[7px] h-3.5 w-px bg-[#999]" />
        <svg width="14" height="16" viewBox="0 0 14 16" fill="none">
          <path d="M.5.500h9.500l3 3v12H.5z" fill="#fff" stroke="#8c99a5" />
          <path d="M3 8.500l2.500 3L10 6" stroke="#e0531f" strokeWidth="2" />
        </svg>
        <Folder className="ml-[6px]" />
        <svg width="8" height="7" viewBox="0 0 8 7" className="mt-0.5 ml-[7px]">
          <path d="M1 .7h6" stroke="#222" strokeWidth="1.200" />
          <path d="M1 3h6L4 6.500z" fill="#222" />
        </svg>
        <span className="mr-[7px] ml-2 h-3.5 w-px bg-[#999]" />
        <span className="tracking-[-0.1px]">Public</span>
        <div className="mr-[18px] ml-auto flex items-center gap-[35px]">
          <svg width="10" height="10" viewBox="0 0 10 10" stroke="#000"><path d="M0 5.500h10" /></svg>
          <svg width="11" height="11" viewBox="0 0 11 11" fill="none" stroke="#000"><path d="M.5.500h10v10H.5z" /></svg>
          <svg width="11" height="11" viewBox="0 0 11 11" stroke="#000"><path d="M.5.500l10 10M10.500.500l-10 10" /></svg>
        </div>
      </div>
      <div className="flex h-[23px] shrink-0 text-[12px] leading-[24px] tracking-[-0.25px] text-[#333]">
        <span className="w-14 bg-[#0063b1] text-center text-white">File</span>
        <span className="-mb-px w-[58px] border border-b-0 border-[#dadbdc] bg-[#f5f6f7] text-center leading-[23px] tracking-[-0.6px]">Home</span>
        <span className="w-[58px] text-center">Share</span>
        <span className="w-[55px] text-center">View</span>
        <svg width="10" height="6" viewBox="0 0 10 6" className="mr-[9px] ml-auto self-center" fill="none" stroke="#aaa">
          <path d="M1 5l4-4 4 4" strokeWidth="1.300" />
        </svg>
        <span className="mt-[3px] mr-1 flex size-4 items-center justify-center rounded-full bg-[#0063b1] text-[12px] font-bold text-white">?</span>
      </div>
      <ExplorerRibbon />
      <div className="flex h-[35px] shrink-0 items-start pt-1.5">
        <div className="flex h-[22px] items-center">
          <svg width="12" height="10" viewBox="0 0 12 10" className="ml-[13px]" fill="none" stroke="#555" strokeWidth="1.500">
            <path d="M5 1L1 5l4 4M1 5h11" />
          </svg>
          <svg width="12" height="10" viewBox="0 0 12 10" className="ml-[17px]" fill="none" stroke="#ccc" strokeWidth="1.500">
            <path d="M7 1l4 4-4 4M11 5H0" />
          </svg>
          <Chevron className="ml-[15px]" />
          <svg width="12" height="12" viewBox="0 0 12 12" className="ml-[11px]" fill="none" stroke="#666" strokeWidth="1.800">
            <path d="M1.500 6L6 1.500 10.500 6M6 2v10" />
          </svg>
        </div>
        <div className="ml-[7px] flex h-[22px] w-[453px] items-center border border-[#d9d9d9] pl-[3px]">
          <Folder />
          <svg width="5" height="8" viewBox="0 0 5 8" className="mx-[7px] shrink-0" fill="none" stroke="#666" strokeWidth="1.300"><path d="M1 1l3 3-3 3" /></svg>
          <span className="w-10 shrink-0 tracking-[-0.4px] whitespace-nowrap">This PC</span>
          <svg width="5" height="8" viewBox="0 0 5 8" className="mx-[9px] shrink-0" fill="none" stroke="#666" strokeWidth="1.300"><path d="M1 1l3 3-3 3" /></svg>
          <span className="tracking-[-0.2px] whitespace-nowrap">Local Disk (C:)</span>
          <span className="ml-auto h-full w-[18px] border-l border-[#d9d9d9]" />
        </div>
        <div className="ml-[11px] flex h-[22px] w-[202px] items-center justify-between border border-[#d9d9d9] pr-2 pl-[5px] tracking-[-0.1px] text-[#6d6d6d]">
          Search Public
          <svg width="11" height="12" viewBox="0 0 11 12" fill="none" stroke="#666">
            <circle cx="6.500" cy="4.500" r="3.500" strokeWidth="1.500" />
            <path d="M4.500 7L.500 11" strokeWidth="2" />
          </svg>
        </div>
      </div>
      <div className="flex h-[386px] shrink-0">
        <div className="w-[139px] overflow-hidden">
          {NAV.map((item, i) => (
            <div
              key={i}
              className={clsx('flex h-6 items-center gap-[5px] tracking-[-0.25px] whitespace-nowrap', LEVEL_PAD[item.level], i === 15 && 'bg-[#d9d9d9]')}
            >
              {item.icon ?? <Folder faded={item.faded} />}
              {item.label}
            </div>
          ))}
        </div>
        <div className="ml-px flex w-[15px] flex-col items-center bg-[#f0f0f0] py-1.5">
          <svg width="9" height="6" viewBox="0 0 9 6" fill="none" stroke="#555" strokeWidth="2"><path d="M1 5l3.500-3.500L8 5" /></svg>
          <span className="mt-[174px] h-[96px] w-full bg-[#cdcdcd]" />
          <svg width="9" height="6" viewBox="0 0 9 6" className="mt-auto" fill="none" stroke="#555" strokeWidth="2"><path d="M1 1l3.500 3.500L8 1" /></svg>
        </div>
        <div className="ml-[5px] flex flex-1 flex-col">
          <div className="mb-1.5 flex h-[25px] items-center pl-[17px] text-[#4c607a]">
            <span className="w-[401px] tracking-[-0.3px]">Name</span>
            <span className="flex h-full w-[118px] items-center border-r border-[#e5e5e5]">Type</span>
            <span className="flex h-full w-20 items-center border-r border-[#e5e5e5] pl-1.5 tracking-[-0.3px]">Size</span>
          </div>
          {FILES.map((f, i) => (
            <div
              key={i}
              className={clsx(
                'ml-[14px] flex h-[21px] w-[598px] items-center tracking-[-0.1px] whitespace-nowrap',
                i === 8 && 'bg-[#cce8ff] outline outline-1 -outline-offset-1 outline-[#99d1ff]',
              )}
            >
              <span className="flex w-[405px] items-center gap-1 pl-1">{f.icon}{f.name}</span>
              <span className="w-[111px] text-[#6d6d6d]">{f.type}</span>
              <span className="w-[78px] text-right tracking-[-0.4px] text-[#6d6d6d]">{f.size}</span>
            </div>
          ))}
          <div className="mt-auto flex h-[15px] items-center bg-[#f0f0f0]">
            <svg width="6" height="9" viewBox="0 0 6 9" className="ml-[5px]" fill="none" stroke="#555" strokeWidth="2"><path d="M5 1L1.500 4.500 5 8" /></svg>
            <span className="ml-1.5 h-full w-[588px] bg-[#cdcdcd]" />
            <svg width="6" height="9" viewBox="0 0 6 9" className="ml-2" fill="none" stroke="#555" strokeWidth="2"><path d="M1 1l3.500 3.500L1 8" /></svg>
          </div>
        </div>
      </div>
      <div className="flex flex-1 items-center pl-3.5 text-[#26406a]">
        <span className="w-[65px] tracking-[-0.45px]">15 items</span>
        <span className="w-[85px] tracking-[-0.4px] whitespace-nowrap">1 item selected</span>
        <span className="tracking-[-0.6px]">23.5 KB</span>
        <div className="mr-[9px] ml-auto flex items-center gap-1">
          <span className="flex h-[23px] w-[22px] items-center justify-center border border-[#2f9bdc] bg-[#cdeafb]">
            <svg width="16" height="14" viewBox="0 0 16 14" fill="none" stroke="#6b7d8a">
              <path d="M.5.500h3v3h-3zM.5 5.500h3v3h-3zM.5 10.500h3v3h-3z" fill="#fff" />
              <path d="M6 2h4M12 2h4M6 7h4M12 7h4M6 12h4M12 12h4" />
            </svg>
          </span>
          <svg width="14" height="11" viewBox="0 0 14 11">
            <path d="M.5.500h13v10H.5z" fill="#fff" stroke="#8c99a5" />
            <path d="M2 2h10v6H2z" fill="#7bb8ea" />
            <path d="M2 5q4-1 10 2v1H2z" fill="#2c5d98" />
          </svg>
        </div>
      </div>
    </div>
  );
}

/* ---------- context menu ---------- */

type MenuEntry = 'sep' | { label: string; icon?: ReactNode; bold?: boolean; sub?: boolean };

const MENU: MenuEntry[] = [
  { label: 'Open', bold: true },
  { label: 'New' },
  { label: 'Print' },
  {
    label: 'Share with Skype',
    icon: (
      <svg width="16" height="16" viewBox="0 0 16 16">
        <circle cx="8" cy="8" r="6.200" fill="#2aa3ea" />
        <circle cx="5" cy="5" r="4" fill="#2aa3ea" />
        <circle cx="11" cy="11" r="4" fill="#1585d8" />
        <path d="M10.500 5.500Q8 3.800 6 5.200q-1 1.800 2 2.600 3.200.8 2.200 2.600-2 1.600-4.700-.1" fill="none" stroke="#fff" strokeWidth="1.600" />
      </svg>
    ),
  },
  {
    label: 'Edit with Notepad++',
    icon: (
      <svg width="16" height="16" viewBox="0 0 16 16">
        <path d="M.500 1.500h12v13H.5z" fill="#f7f7ef" stroke="#666" />
        <path d="M2 5h9.500v8.500H2z" fill="#7fc41c" />
        <path d="M2 5h9.500L7 9H2z" fill="#dcefa0" />
        <path d="M8 9l5.500-8" stroke="#eba23a" strokeWidth="1.800" />
        <path d="M12.500 2.500l2-2" stroke="#333" strokeWidth="2" />
      </svg>
    ),
  },
  {
    label: 'Share',
    icon: (
      <svg width="16" height="16" viewBox="0 0 16 16" fill="none" stroke="#222">
        <path d="M3 4.500H.5v9h11V11" strokeWidth="1.100" />
        <path d="M4 11q0-5.500 5.500-5.500V2.500L15 7l-5.500 4.500v-3Q6 8.500 4 11z" strokeWidth="1.100" />
      </svg>
    ),
  },
  { label: 'Open with...' },
  'sep',
  { label: 'Give access to', sub: true },
  { label: 'Add to archive...', icon: <RarIcon /> },
  { label: 'Add to "~$BD_QPAN_2024.rar"', icon: <RarIcon /> },
  { label: 'Compress and email...', icon: <RarIcon /> },
  { label: 'Compress to "~$BD_QPAN_2024.rar" and email', icon: <RarIcon /> },
  { label: 'Restore previous versions' },
  'sep',
  { label: 'Send to', sub: true },
  'sep',
  { label: 'Cut' },
  { label: 'Copy' },
  'sep',
  { label: 'Create shortcut' },
  { label: 'Delete' },
  { label: 'Rename' },
  'sep',
  { label: 'Properties' },
];

function ContextMenu() {
  return (
    <div className="absolute top-[195px] left-[549px] h-[485px] w-[360px] border border-[#a0a0a0] bg-[#eeeeee] pt-1 text-[12px] text-black">
      {MENU.map((m, i) =>
        m === 'sep' ? (
          <div key={i} className="flex h-[7px] items-center pr-2.5 pl-2.5">
            <span className="h-px flex-1 bg-[#919191]" />
          </div>
        ) : (
          <div key={i} className="flex h-[22px] items-center pr-2.5 pl-2.5">
            <span className="flex w-6 shrink-0">{m.icon}</span>
            <span className={clsx('whitespace-nowrap', m.bold ? 'font-bold tracking-[-0.4px]' : 'tracking-[-0.36px]')}>{m.label}</span>
            {m.sub && (
              <svg width="8" height="13" viewBox="0 0 8 13" className="ml-auto" fill="none" stroke="#333">
                <path d="M1 .5l6 6-6 6" strokeWidth="1.100" />
              </svg>
            )}
          </div>
        ),
      )}
    </div>
  );
}

/* ---------- taskbar ---------- */

function Taskbar() {
  return (
    <div className="flex h-10 shrink-0 items-center bg-linear-to-r from-[#001920] via-[#00101f] to-[#02081a] text-white">
      <div className="flex h-full w-12 items-center justify-center">
        <svg width="16" height="16" viewBox="0 0 16 16" fill="#fff">
          <path d="M0 2.300L7 1.300v6.200H0zM8 1.200L16 0v7.500H8zM0 8.500h7v6.200L0 13.700zM8 8.500h8V16l-8-1.200z" />
        </svg>
      </div>
      <div className="flex h-full w-[288px] items-center border border-[#cfcfcf] bg-[#f2f2f2] pl-[11px] text-[#444]">
        <svg width="17" height="17" viewBox="0 0 17 17" fill="none" stroke="#222" className="shrink-0">
          <circle cx="10.500" cy="6.500" r="5.500" strokeWidth="1.400" />
          <path d="M6.500 10.500L1 16" strokeWidth="1.600" />
        </svg>
        <span className="ml-[11px] w-[128px] pt-px text-[14.500px] tracking-[-0.3px] whitespace-nowrap">Type here to search</span>
        <svg width="66" height="38" viewBox="0 0 66 38" className="ml-auto shrink-0">
          <defs>
            <linearGradient id="sky" x1="0" y1="0" x2="1" y2="0">
              <stop offset="0" stopColor="#f2f2f2" />
              <stop offset="0.5" stopColor="#d9edf7" />
              <stop offset="1" stopColor="#eaf2f3" />
            </linearGradient>
          </defs>
          <path d="M0 38Q8 22 24 14q26-2 42 4v20z" fill="url(#sky)" />
          <path d="M5 12l9-2v28H5z" fill="#5b93bf" />
          <path d="M7 13h5v6H7z" fill="#d6ecf9" />
          <path d="M26 0l1 9 5 29H21L26 9z" fill="#3ba3dc" />
          <path d="M26 6v32" stroke="#9edaf5" />
          <path d="M38 13l4-3 3 3v25h-7z" fill="#4ea283" />
          <path d="M33 28h4v10h-4zM15 28h4v10h-4z" fill="#7fb4dc" />
          <path d="M50 26l5-3v15h-5z" fill="#bfdfe8" />
        </svg>
      </div>
      <div className="flex h-full w-12 items-center justify-center">
        <svg width="17" height="16" viewBox="0 0 17 16" fill="none" stroke="#fff">
          <path d="M.5 0v2.500h10V0M.5 5h10v6H.5zM.5 16v-2.500h10V16M14.500 0v3M14.500 9v7" strokeWidth="1.200" />
          <path d="M13 4.500h3v3h-3z" fill="#fff" stroke="none" />
        </svg>
      </div>
      <div className="flex h-full w-[52px] items-center justify-center">
        <svg width="25" height="25" viewBox="0 0 25 25">
          <defs>
            <linearGradient id="edgeTop" x1="0" y1="0" x2="1" y2="0.4">
              <stop offset="0" stopColor="#2aa7e6" />
              <stop offset="1" stopColor="#62d957" />
            </linearGradient>
          </defs>
          <circle cx="12.500" cy="12.500" r="12" fill="#1a72c9" />
          <path d="M1 10Q3 .5 12.500.5 24 1 24.500 11q-1 5-6 5-5 0-4-3 1-6-5-6Q4 6.500 1 10z" fill="url(#edgeTop)" />
          <path d="M9 11Q6 18 12 22q5 3 9-2-7 2-9-2-2-3 0-6z" fill="#0c4c94" />
          <path d="M11 12q3-3 4 0 0 3 2 5-5 0-6-5zM15 16q4 2 9 0l-1 3q-4 1-8-3z" fill="#04202e" />
        </svg>
      </div>
      <div className="flex h-full w-12 items-center justify-center border-b-2 border-[#76b9ed] bg-[#32454d]">
        <svg width="23" height="19" viewBox="0 0 23 19">
          <path d="M0 0h9l2 2h11v4H0z" fill="#e89a20" />
          <path d="M0 3h22v15H0z" fill="#fcd462" />
          <path d="M4 18v-6q0-2 2-2h10q2 0 2 2v6h-4v-4H8v4z" fill="#3a8fd9" />
        </svg>
      </div>
      <div className="flex h-full w-[51px] items-center justify-center">
        <svg width="23" height="24" viewBox="0 0 23 24">
          <defs>
            <linearGradient id="fox" x1="0.8" y1="0" x2="0.3" y2="1">
              <stop offset="0" stopColor="#ffe14a" />
              <stop offset="0.5" stopColor="#ff8a1f" />
              <stop offset="1" stopColor="#f0295f" />
            </linearGradient>
          </defs>
          <path d="M2 3l2 3 3-3 1 3q3 0 4-6 4 2 5 6l2-1q4 5 3.500 9-1.500 9.500-11 10Q1 23 .3 13 .2 7 2 3z" fill="url(#fox)" />
          <circle cx="11.500" cy="12.500" r="5" fill="#7542d8" />
          <path d="M5 8q4-2 6 1l-3 2q1 3 5 2-3 5-7 2-2-3-1-7z" fill="#ff9a26" />
        </svg>
      </div>
      <div className="ml-[3px] flex h-full w-10 items-center justify-center border-b-2 border-[#76b9ed]">
        <ExcelLogo size={24} />
      </div>
      <div className="mr-[3px] ml-auto flex items-center">
        <svg width="12" height="7" viewBox="0 0 12 7" fill="none" stroke="#fff" strokeWidth="1.300"><path d="M1 6l5-5 5 5" /></svg>
        <svg width="12" height="16" viewBox="0 0 12 16" className="ml-[13px]" fill="none" stroke="#fff">
          <path d="M2 2q4-2.500 8 0M2 14q4 2.500 8 0M1 4.500h7v7H1zM8 7l3-1.500v5L8 9" strokeWidth="1.100" />
        </svg>
        <svg width="17" height="14" viewBox="0 0 17 14" className="ml-2.5" fill="none" stroke="#fff">
          <path d="M5.500 2.500h11v7h-11M.5.500h4v4h-4zM2.500 5v8M10.500 10v3M7 13.500h7" strokeWidth="1.100" />
        </svg>
        <svg width="17" height="14" viewBox="0 0 17 14" className="ml-[7px]" fill="none" stroke="#fff">
          <path d="M.500 5h3l3-3v10l-3-3h-3zM9 5q1.500 2 0 4M11.500 3.500q3 3.500 0 7M14 1.500q4 5 0 11" strokeWidth="1.100" />
        </svg>
        <div className="ml-[9px] flex w-[54px] flex-col items-center text-[12px] leading-[18px] tracking-[-0.45px] whitespace-nowrap">
          <span>4:33 PM</span>
          <span>8/28/2024</span>
        </div>
        <svg width="17" height="16" viewBox="0 0 17 16" className="ml-[17px]" fill="none" stroke="#fff">
          <path d="M.500.500h16v11.500H11l-2.500 3-2.500-3H.5z" strokeWidth="1.200" />
        </svg>
        <span className="ml-5 h-10 w-px bg-[#4a5560]" />
      </div>
    </div>
  );
}

function Watermark() {
  return (
    <svg width="200" height="68" viewBox="0 0 200 68" className="absolute top-[608px] left-[1036px]" fontFamily="Liberation Sans" fontSize="45">
      <g fill="none" stroke="#9a9a9a" strokeOpacity=".25" strokeWidth="3">
        <path d="M84 3l44 26-50 33V49l28-20-22-13zM74 8v45" />
      </g>
      <g fill="#fff" fillOpacity=".8" stroke="#a5a5a5" strokeOpacity=".4" strokeWidth="3" paintOrder="stroke">
        <text x="3" y="50" textLength="64" lengthAdjust="spacingAndGlyphs">ANY</text>
        <text x="135" y="50" textLength="60" lengthAdjust="spacingAndGlyphs">RUN</text>
      </g>
      <g fill="#fff" fillOpacity=".55" stroke="#fff" strokeOpacity=".75" strokeWidth="1.500">
        <path d="M84 3l44 26-50 33V49l28-20-22-13z" />
        <path d="M74 8v45" strokeWidth="2" />
      </g>
    </svg>
  );
}

export default function App() {
  return (
    <div className="relative flex h-[720px] w-[1280px] flex-col overflow-hidden bg-[#e6e6e6] font-['Open_Sans',sans-serif]">
      <TitleBar />
      <ExcelTabs />
      <ExcelRibbon />
      <FormulaBar />
      <Sheet />
      <SheetTabs />
      <StatusBar />
      <Taskbar />
      <Explorer />
      <ContextMenu />
      <Watermark />
    </div>
  );
}
